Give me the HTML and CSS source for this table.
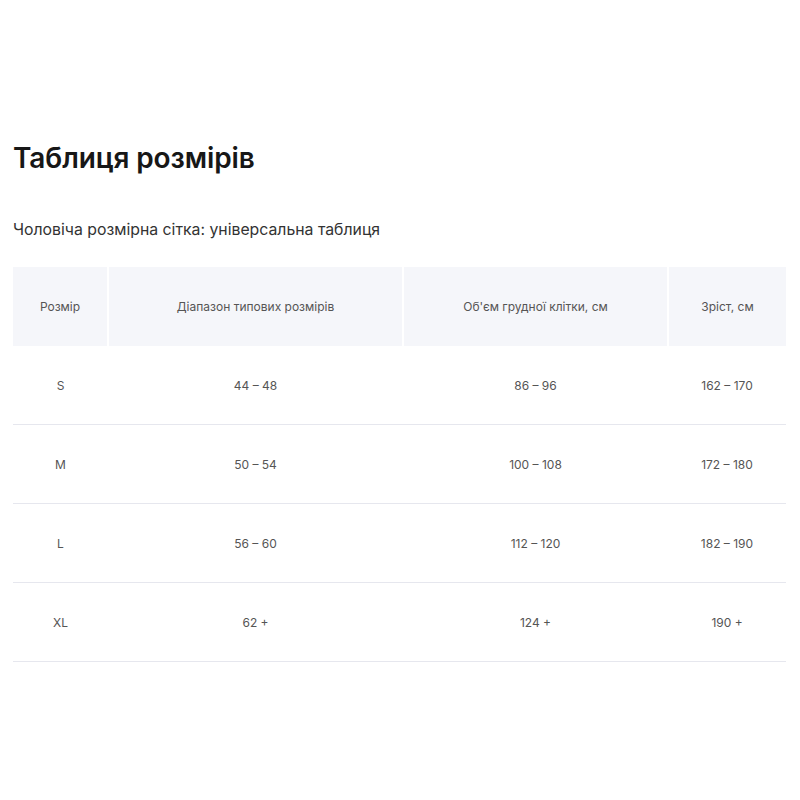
FILE: index.html
```html
<!DOCTYPE html>
<html lang="uk">
<head>
<meta charset="utf-8">
<link rel="stylesheet" href="styles.css">
</head>
<body>
<main class="page">
  <h1 class="title">Таблиця розмірів</h1>
  <p class="subtitle">Чоловіча розмірна сітка: універсальна таблиця</p>
  <table class="sizes">
    <colgroup>
      <col class="c1"><col class="c2"><col class="c3"><col class="c4">
    </colgroup>
    <thead>
      <tr>
        <th>Розмір</th>
        <th>Діапазон типових розмірів</th>
        <th>Об'єм грудної клітки, см</th>
        <th>Зріст, см</th>
      </tr>
    </thead>
    <tbody>
      <tr><td>S</td><td>44 – 48</td><td>86 – 96</td><td>162 – 170</td></tr>
      <tr><td>M</td><td>50 – 54</td><td>100 – 108</td><td>172 – 180</td></tr>
      <tr><td>L</td><td>56 – 60</td><td>112 – 120</td><td>182 – 190</td></tr>
      <tr><td>XL</td><td>62 +</td><td>124 +</td><td>190 +</td></tr>
    </tbody>
  </table>
</main>
</body>
</html>
```

FILE: styles.css
```css
html, body {
  margin: 0;
  padding: 0;
  background: #ffffff;
}
.page {
  padding: 140px 14px 0 13px;
  font-family: Inter, "Noto Sans", sans-serif;
  color: #1a1a1a;
}
.title {
  margin: 0;
  font-size: 28px;
  line-height: 36px;
  font-weight: 600;
  color: #171717;
  letter-spacing: -0.1px;
}
.subtitle {
  margin: 44px 0 0;
  font-size: 15.8px;
  line-height: 20px;
  color: #333333;
}
.sizes {
  margin-top: 27px;
  width: 773px;
  border-collapse: collapse;
  table-layout: fixed;
  font-size: 12px;
  color: #555555;
}
.c1 { width: 95px; }
.c2 { width: 295px; }
.c3 { width: 265px; }
.c4 { width: 118px; }
.sizes th {
  height: 79px;
  padding: 0;
  background: #f5f6fa;
  font-weight: 400;
  text-align: center;
  border-right: 2px solid #ffffff;
}
.sizes th:last-child { border-right: none; }
.sizes td {
  height: 78px;
  padding: 0;
  text-align: center;
  border-bottom: 1px solid #e6e7ee;
}
```
